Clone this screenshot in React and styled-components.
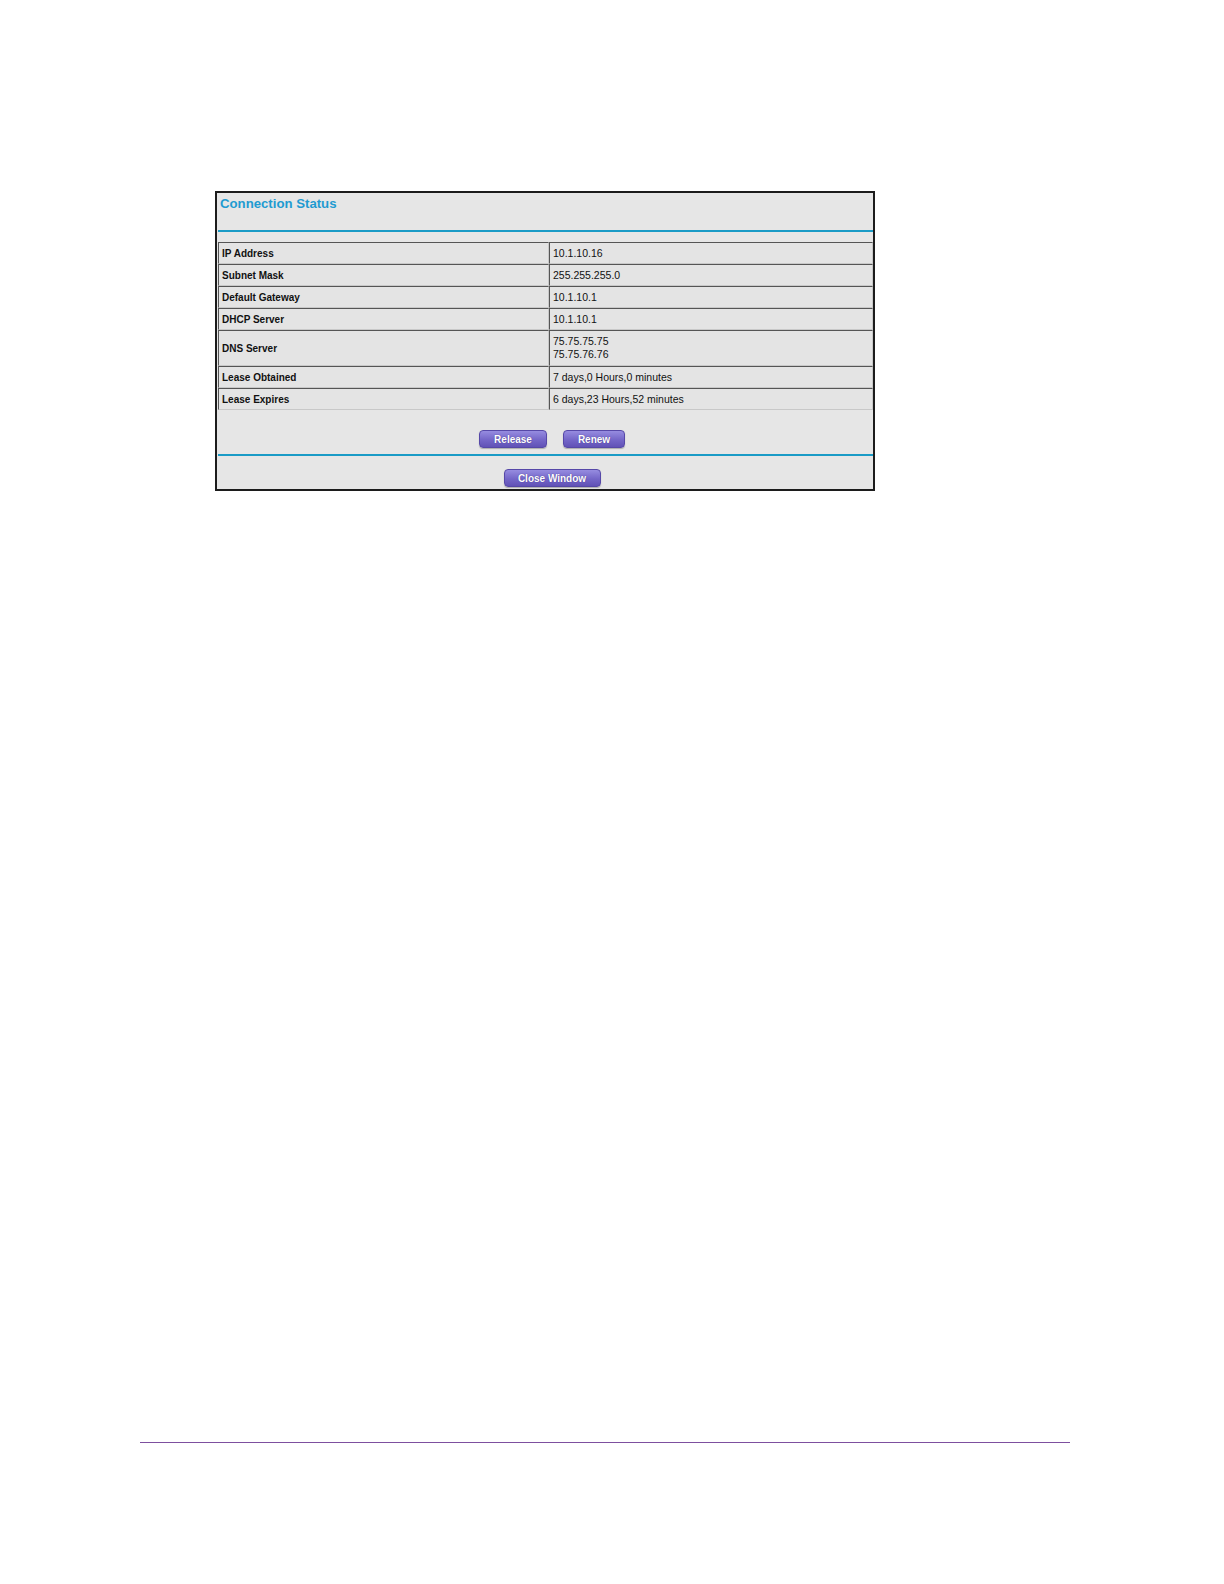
import React from "react";
import styled, { createGlobalStyle } from "styled-components";

const GlobalStyle = createGlobalStyle`
  html, body {
    margin: 0;
    padding: 0;
    background: #ffffff;
  }
`;

const Page = styled.div`
  width: 1224px;
  height: 1584px;
  display: flex;
  flex-direction: column;
  font-family: "Liberation Sans", Arial, sans-serif;
  box-sizing: border-box;
`;

const Frame = styled.div`
  width: 660px;
  margin: 191px 0 0 215px;
  box-sizing: border-box;
  border: 2px solid #1c1c1c;
  background: #e6e6e6;
  display: flex;
  flex-direction: column;
`;

const Header = styled.div`
  height: 37px;
  padding: 3px 0 0 3px;
  box-sizing: border-box;
`;

const Title = styled.h1`
  margin: 0;
  font-size: 13.2px;
  font-weight: bold;
  color: #1f9bd1;
`;

const Rule = styled.div`
  height: 2px;
  margin: 0 0 0 1px;
  background: #1a9bc6;
`;

const Table = styled.table`
  margin: 10px 0 0 1px;
  width: 655px;
  border-collapse: separate;
  border-spacing: 0;
  table-layout: fixed;
`;

const Cell = styled.td`
  height: ${(p) => p.$h}px;
  padding: 0 0 0 3px;
  box-sizing: border-box;
  border-style: solid;
  border-width: 1px;
  border-color: #555555 #c8c8c8 #c8c8c8 #555555;
  background: #e4e4e4;
  color: #111111;
  font-size: ${(p) => (p.$label ? "10px" : "10.5px")};
  font-weight: ${(p) => (p.$label ? "bold" : "normal")};
  line-height: 13px;
  vertical-align: middle;
  width: ${(p) => (p.$label ? "331px" : "auto")};
`;

const ButtonRow = styled.div`
  display: flex;
  justify-content: center;
  gap: 16px;
  padding: ${(p) => p.$pad};
  padding-left: 14px;
`;

const Button = styled.button`
  width: ${(p) => p.$w}px;
  height: 18px;
  padding: 0;
  border: 1px solid #5648a8;
  border-radius: 4px;
  background: linear-gradient(#968ce0, #7466c8 55%, #6152b6);
  color: #ffffff;
  font-family: "Liberation Sans", Arial, sans-serif;
  font-size: 10px;
  font-weight: bold;
  text-shadow: 0 0 1px #3e3280;
  box-shadow: 0 1px 1px rgba(0, 0, 0, 0.25);
  cursor: pointer;
`;

const Footer = styled.div`
  margin: auto 0 141px 140px;
  width: 930px;
  height: 1px;
  background: #7d4f9f;
`;

const rows = [
  ["IP Address", ["10.1.10.16"]],
  ["Subnet Mask", ["255.255.255.0"]],
  ["Default Gateway", ["10.1.10.1"]],
  ["DHCP Server", ["10.1.10.1"]],
  ["DNS Server", ["75.75.75.75", "75.75.76.76"]],
  ["Lease Obtained", ["7 days,0 Hours,0 minutes"]],
  ["Lease Expires", ["6 days,23 Hours,52 minutes"]],
];

export default function App() {
  return (
    <Page>
      <GlobalStyle />
      <Frame>
        <Header>
          <Title>Connection Status</Title>
        </Header>
        <Rule />
        <Table>
          <tbody>
            {rows.map(([label, values]) => {
              const h = values.length > 1 ? 36 : 22;
              return (
                <tr key={label}>
                  <Cell $label $h={h}>
                    {label}
                  </Cell>
                  <Cell $h={h}>
                    {values.map((v, i) => (
                      <div key={i}>{v}</div>
                    ))}
                  </Cell>
                </tr>
              );
            })}
          </tbody>
        </Table>
        <ButtonRow $pad="20px 0 6px">
          <Button $w={68}>Release</Button>
          <Button $w={62}>Renew</Button>
        </ButtonRow>
        <Rule />
        <ButtonRow $pad="13px 0 2px">
          <Button $w={97}>Close Window</Button>
        </ButtonRow>
      </Frame>
      <Footer />
    </Page>
  );
}
